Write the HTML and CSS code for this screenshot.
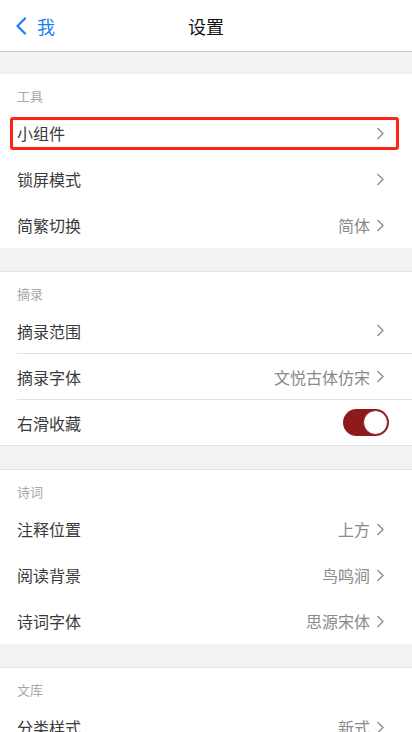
FILE: index.html
```html
<!DOCTYPE html>
<html lang="zh-CN">
<head>
<meta charset="utf-8">
<title>设置</title>
<link rel="stylesheet" href="styles.css">
</head>
<body>
<header class="nav">
  <div class="back">
    <svg class="back-icon" width="12" height="18" viewBox="0 0 12 18"><path d="M10 1.5 L2.5 9 L10 16.5" fill="none" stroke="#1b7ff2" stroke-width="2.2" stroke-linecap="round" stroke-linejoin="round"/></svg>
    <span class="back-text">我</span>
  </div>
  <div class="title">设置</div>
</header>
<div class="gap first"></div>

<section class="group">
  <div class="group-title">工具</div>
  <div class="row highlight"><span class="label">小组件</span><span class="right"><svg class="chev" width="9" height="13" viewBox="0 0 9 13"><path d="M1.5 1 L7 6.5 L1.5 12" fill="none" stroke="#8a8a8a" stroke-width="1.3"/></svg></span></div>
  <div class="row"><span class="label">锁屏模式</span><span class="right"><svg class="chev" width="9" height="13" viewBox="0 0 9 13"><path d="M1.5 1 L7 6.5 L1.5 12" fill="none" stroke="#8a8a8a" stroke-width="1.3"/></svg></span></div>
  <div class="row"><span class="label">简繁切换</span><span class="right"><span class="value">简体</span><svg class="chev" width="9" height="13" viewBox="0 0 9 13"><path d="M1.5 1 L7 6.5 L1.5 12" fill="none" stroke="#8a8a8a" stroke-width="1.3"/></svg></span></div>
</section>
<div class="gap"></div>

<section class="group lined">
  <div class="group-title">摘录</div>
  <div class="row div"><span class="label">摘录范围</span><span class="right"><svg class="chev" width="9" height="13" viewBox="0 0 9 13"><path d="M1.5 1 L7 6.5 L1.5 12" fill="none" stroke="#8a8a8a" stroke-width="1.3"/></svg></span></div>
  <div class="row div"><span class="label">摘录字体</span><span class="right"><span class="value">文悦古体仿宋</span><svg class="chev" width="9" height="13" viewBox="0 0 9 13"><path d="M1.5 1 L7 6.5 L1.5 12" fill="none" stroke="#8a8a8a" stroke-width="1.3"/></svg></span></div>
  <div class="row"><span class="label">右滑收藏</span><span class="right"><span class="toggle"><span class="knob"></span></span></span></div>
</section>
<div class="gap"></div>

<section class="group">
  <div class="group-title">诗词</div>
  <div class="row"><span class="label">注释位置</span><span class="right"><span class="value">上方</span><svg class="chev" width="9" height="13" viewBox="0 0 9 13"><path d="M1.5 1 L7 6.5 L1.5 12" fill="none" stroke="#8a8a8a" stroke-width="1.3"/></svg></span></div>
  <div class="row"><span class="label">阅读背景</span><span class="right"><span class="value">鸟鸣涧</span><svg class="chev" width="9" height="13" viewBox="0 0 9 13"><path d="M1.5 1 L7 6.5 L1.5 12" fill="none" stroke="#8a8a8a" stroke-width="1.3"/></svg></span></div>
  <div class="row"><span class="label">诗词字体</span><span class="right"><span class="value">思源宋体</span><svg class="chev" width="9" height="13" viewBox="0 0 9 13"><path d="M1.5 1 L7 6.5 L1.5 12" fill="none" stroke="#8a8a8a" stroke-width="1.3"/></svg></span></div>
</section>
<div class="gap"></div>

<section class="group">
  <div class="group-title">文库</div>
  <div class="row"><span class="label">分类样式</span><span class="right"><span class="value">新式</span><svg class="chev" width="9" height="13" viewBox="0 0 9 13"><path d="M1.5 1 L7 6.5 L1.5 12" fill="none" stroke="#8a8a8a" stroke-width="1.3"/></svg></span></div>
</section>
</body>
</html>
```

FILE: styles.css
```css
html, body {
  margin: 0;
  padding: 0;
  background: #ffffff;
}
body {
  font-family: "Noto Sans CJK SC", "Noto Sans", sans-serif;
  width: 412px;
  height: 732px;
  overflow: hidden;
  color: #333333;
}
.nav {
  height: 51px;
  border-bottom: 1px solid #c9c9c9;
  display: flex;
  align-items: center;
  justify-content: center;
  position: relative;
  background: #fff;
}
.back {
  position: absolute;
  left: 15px;
  top: 0;
  height: 51px;
  display: flex;
  align-items: center;
  gap: 10px;
  color: #1b7ff2;
}
.back-icon {
  display: block;
  margin-top: 0;
}
.back-text {
  font-size: 18px;
  line-height: 1;
}
.title {
  font-size: 18px;
  line-height: 1;
  color: #111;
}
.gap {
  height: 23px;
  background: #f2f2f2;
  border-bottom: 1px solid #e2e2e2;
}
.gap.first {
  height: 22px;
  border-bottom: none;
}
.group {
  background: #fff;
}
.group.lined {
  border-bottom: 1px solid #e2e2e2;
}
.group.lined .row:last-child {
  height: 45px;
}
.group-title {
  height: 36px;
  box-sizing: border-box;
  padding: 15px 0 0 17px;
  font-size: 13px;
  line-height: 14px;
  color: #a8a8a8;
}
.row {
  height: 46px;
  box-sizing: border-box;
  display: flex;
  align-items: center;
  justify-content: space-between;
  padding: 0 27px 0 17px;
  position: relative;
}
.row.div {
  border-bottom: 1px solid #e2e2e2;
}
.row.div {
  margin-left: 17px;
  padding-left: 0;
}
.label {
  font-size: 16px;
  line-height: 1;
  color: #3a3a3a;
}
.right {
  display: flex;
  align-items: center;
  gap: 6px;
}
.value {
  font-size: 16px;
  line-height: 1;
  color: #8a8a8a;
}
.chev {
  display: block;
}
.highlight::after {
  content: "";
  position: absolute;
  left: 10px;
  right: 13px;
  top: 7px;
  bottom: 6px;
  border: 3px solid #ff2419;
  border-radius: 3px;
}
.toggle {
  width: 46px;
  height: 27px;
  border-radius: 14px;
  background: #8e1a1c;
  display: flex;
  align-items: center;
  justify-content: flex-end;
  margin-right: -4px;
  box-sizing: border-box;
  padding: 1px;
}
.knob {
  width: 25px;
  height: 25px;
  border-radius: 50%;
  background: #fff;
  box-sizing: border-box;
  border: 1px solid #8e1a1c;
}
```
